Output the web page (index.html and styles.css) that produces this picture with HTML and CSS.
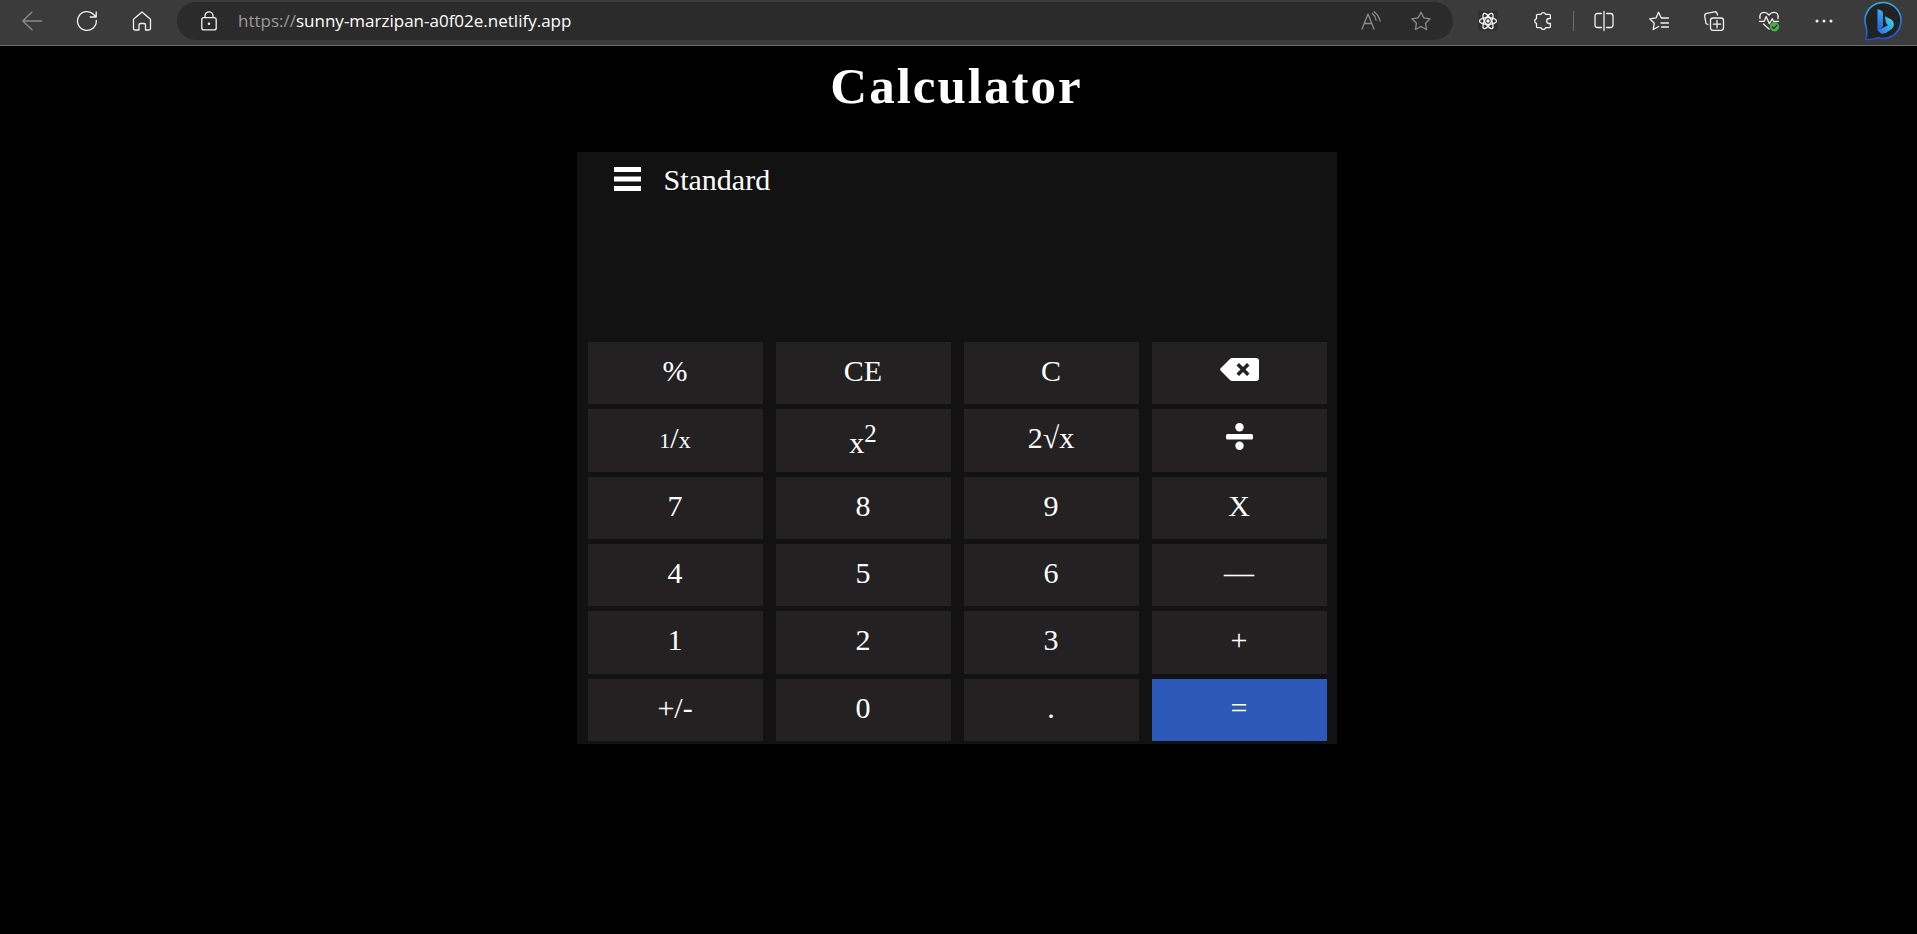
FILE: index.html
```html
<!DOCTYPE html>
<html lang="en">
<head>
<meta charset="utf-8">
<title>Calculator</title>
<link rel="stylesheet" href="styles.css">
</head>
<body>
<header class="toolbar">
  <nav class="nav" aria-label="Browser navigation">
    <button class="tool dim" aria-label="Back"><svg viewBox="0 0 20 20"><path d="M19.500 10H.8M10 1L.8 10l9.200 8.700"/></svg></button>
    <button class="tool" aria-label="Refresh"><svg viewBox="0 0 20 20"><path d="M19.300 9.500a9.400 9.400 0 1 1-2.600-6L19 6M19.200.8V6h-6"/></svg></button>
    <button class="tool" aria-label="Home"><svg viewBox="0 0 20 20"><path d="M1.500 8.200L10 1l8.500 7.200v9.300q0 1.500-1.500 1.500h-3.500v-5q0-1.500-1.500-1.500H8.500Q7 12.500 7 14v5H3q-1.500 0-1.500-1.500z"/></svg></button>
  </nav>
  <div class="address">
    <button class="lock" aria-label="Site information"><svg viewBox="0 0 20 20"><rect x="2.800" y="6.700" width="14.400" height="12.200" rx="2"/><path d="M6 6.500V4.800a4 4 0 0 1 8 0v1.700"/><circle class="solid" cx="10" cy="12.700" r="1.300"/></svg></button>
    <a class="url" href="#"><span class="scheme">https://</span>sunny-marzipan-a0f02e.netlify.app</a>
    <div class="page-tools">
      <button class="tool dim" aria-label="Read aloud"><svg viewBox="0 0 20 20"><path d="M1 18L7 3l6 15M3.400 12.500h7.200M11.500 2.500q3 2.500 3.500 6.500M13 .8q5 3.500 6 9.200"/></svg></button>
      <button class="tool dim" aria-label="Add to favorites"><svg viewBox="0 0 20 20"><path d="M10 1.200l2.800 5.700 6.300.9-4.600 4.400 1.100 6.300-5.600-3-5.600 3 1.100-6.300L.9 7.800l6.300-.9z"/></svg></button>
    </div>
  </div>
  <div class="actions">
    <button class="tool react" aria-label="React extension"><svg viewBox="0 0 20 20"><ellipse cx="10" cy="10" rx="8.500" ry="3.300"/><ellipse cx="10" cy="10" rx="8.500" ry="3.300" transform="rotate(60 10 10)"/><ellipse cx="10" cy="10" rx="8.500" ry="3.300" transform="rotate(120 10 10)"/><circle class="solid" cx="10" cy="10" r="1.700"/></svg></button>
    <button class="tool" aria-label="Extensions"><svg viewBox="0 0 20 20"><path d="M4.800 3.300H8a2.400 2.400 0 0 1 4.600 0h3.500q1.300 0 1.300 1.300v2.900h-1.200a2.500 2.500 0 0 0 0 5h1.200v2.900q0 1.300-1.300 1.300h-3.500a2.400 2.400 0 0 1-4.600 0H4.800q-1.300 0-1.300-1.300v-3a2.500 2.500 0 0 1 0-4.800v-3q0-1.300 1.300-1.300z"/></svg></button>
    <span class="divider"></span>
    <button class="tool" aria-label="Split screen"><svg viewBox="0 0 20 20"><path d="M7.500 2.500H3.500q-2.500 0-2.500 2.500v9q0 2.500 2.500 2.500h4M12.500 2.500h4q2.500 0 2.500 2.500v9q0 2.500-2.500 2.500h-4M10 .5v19"/></svg></button>
    <button class="tool" aria-label="Favorites"><svg viewBox="0 0 20 20"><path d="M19.500 7h-7.200L9.500 1.200 7 6.900l-6.300.9 4.600 4.400-1.100 6.300 5.500-3M12 12h7.500M12.500 16h7"/></svg></button>
    <button class="tool" aria-label="Collections"><svg viewBox="0 0 20 20"><rect x="6.500" y="7" width="13" height="12.300" rx="2.500"/><path d="M13 9.500v7.300M9.300 13.200h7.400M3.800 13.500L2 12.500.7 5.200Q.4 2.900 2.600 2.400L10.500.8q2-.3 2.600 1.700l.4 1.500"/></svg></button>
    <button class="tool" aria-label="Browser essentials"><svg viewBox="0 0 20 20"><path d="M1 7.500C.3 3 2.500 1.300 5 1.300q3 0 5 2.700 2-2.700 5-2.700c2.500 0 4.700 1.700 4 6.200M.5 10.300h4.700l2-4.800 3.200 7.200 2.800-5 1.300 2.600h5M4.500 13l5.500 5"/><circle class="badge" cx="15.500" cy="15.800" r="4.700"/><path class="check" d="M13.200 16l1.600 1.600 3-3.300"/></svg></button>
    <button class="tool" aria-label="Settings and more"><svg viewBox="0 0 20 20"><circle class="solid" cx="3" cy="10" r="1.500"/><circle class="solid" cx="10" cy="10" r="1.500"/><circle class="solid" cx="17" cy="10" r="1.500"/></svg></button>
    <button class="bing" aria-label="Bing"><svg viewBox="0 0 40 40"><defs><linearGradient id="ring" x2="0" y2="1"><stop stop-color="#2bb4ee"/><stop offset="1" stop-color="#1b50d0"/></linearGradient><linearGradient id="stem" x2="0" y2="1"><stop stop-color="#37b1f5"/><stop offset="1" stop-color="#2358dc"/></linearGradient><linearGradient id="bowl" x1="1" x2="0" y2="1"><stop stop-color="#3ce0e0"/><stop offset="1" stop-color="#2e6cf0"/></linearGradient></defs><path d="M1.800 38.200Q3.600 33 2.200 26A18 18 0 1 1 14 36.800Q7.500 39.300 1.800 38.200z" fill="#222" stroke="url(#ring)" stroke-width="1.600"/><path d="M13.500 8l3.800 1.400q1.700.7 1.700 2.500V25l-4 6q-1.500-1-1.500-3z" fill="url(#stem)"/><path d="M20.800 15.200l5.700 2.800q3.800 2.200 3.300 6.500-.5 3.200-3.700 4.800l-4.500 2.700q-5 2.500-7.300-2.700l9.700-5-2-2.200z" fill="url(#bowl)"/></svg></button>
  </div>
</header>
<main class="page">
  <h1 class="title">Calculator</h1>
  <section class="calculator" aria-label="Calculator">
    <div class="mode">
      <button class="menu" aria-label="Menu"><svg viewBox="0 0 27 25"><path d="M0 0h27v5H0zM0 9.500h27v5H0zM0 19h27v5H0z"/></svg></button>
      <span>Standard</span>
    </div>
    <output class="display"></output>
    <div class="keys">
      <button class="key">%</button>
      <button class="key">CE</button>
      <button class="key">C</button>
      <button class="key" aria-label="Backspace"><svg class="erase" viewBox="0 0 39 23"><path fill-rule="evenodd" d="M12 0h24q3 0 3 3v17q0 3-3 3H12q-1.200 0-2-1L.7 12.700q-1.100-1.200 0-2.400L10 1q.8-1 2-1zM20.500 11.500L16.500 15.500 19 18l4-4 4 4 2.500-2.500-4-4 4-4L27 5l-4 4-4-4-2.500 2.500z"/></svg></button>
      <button class="key"><span><span class="num">1</span>/<span class="den">x</span></span></button>
      <button class="key power"><span>x<sup>2</sup></span></button>
      <button class="key">2√x</button>
      <button class="key" aria-label="Divide"><svg class="divide" viewBox="0 0 27 27"><circle cx="13.500" cy="4.200" r="4.200"/><rect y="11" width="27" height="5.500" rx="1.500"/><circle cx="13.500" cy="22.800" r="4.200"/></svg></button>
      <button class="key">7</button>
      <button class="key">8</button>
      <button class="key">9</button>
      <button class="key">X</button>
      <button class="key">4</button>
      <button class="key">5</button>
      <button class="key">6</button>
      <button class="key">—</button>
      <button class="key">1</button>
      <button class="key">2</button>
      <button class="key">3</button>
      <button class="key">+</button>
      <button class="key">+/-</button>
      <button class="key">0</button>
      <button class="key">.</button>
      <button class="key equals">=</button>
    </div>
  </section>
</main>
</body>
</html>
```
FILE: styles.css
```css
* {
  box-sizing: border-box;
}

body {
  margin: 0;
  min-height: 100vh;
  background: #000;
  color: #fff;
  font-family: "Liberation Serif", "Times New Roman", serif;
}

button {
  margin: 0;
  padding: 0;
  border: 0;
  background: none;
  color: inherit;
  font: inherit;
  cursor: pointer;
}

svg {
  display: block;
}

.toolbar {
  display: flex;
  align-items: center;
  gap: 25px;
  height: 46px;
  padding: 0 13px 4px 22px;
  border-bottom: 1px solid #6e6e6e;
  background: #3b3b3b;
}

.nav {
  display: flex;
  gap: 35px;
}

.tool,
.lock {
  flex: none;
  width: 20px;
  height: 20px;
  color: #f2f2f2;
}

.tool svg,
.lock svg {
  width: 20px;
  height: 20px;
  overflow: visible;
  fill: none;
  stroke: currentColor;
  stroke-width: 1.3;
  stroke-linecap: round;
  stroke-linejoin: round;
}

.tool .solid,
.lock .solid {
  fill: currentColor;
  stroke: none;
}

.tool.dim {
  color: #8c8c8c;
}

.tool .badge {
  fill: #4caf50;
  stroke: none;
}

.tool .check {
  stroke: #1f3d20;
}

.react {
  background: #303030;
}

.address {
  display: flex;
  flex: 1;
  align-items: center;
  gap: 19px;
  height: 38px;
  padding: 0 22px;
  border-radius: 19px;
  background: #2b2b2b;
}

.url {
  flex: 1;
  color: #fff;
  font: 17px/24px "Open Sans", "Noto Sans", sans-serif;
  text-decoration: none;
}

.scheme {
  color: #9a9a9a;
}

.page-tools {
  display: flex;
  gap: 30px;
}

.actions {
  display: flex;
  align-items: center;
  gap: 35px;
}

.divider {
  width: 1px;
  height: 20px;
  margin: 0 -15px;
  background: #6e6e6e;
}

.bing {
  width: 40px;
  height: 40px;
  margin-left: -5px;
}

.page {
  display: flex;
  flex-direction: column;
  align-items: center;
  padding-right: 4px;
}

.title {
  margin: 12px 0 38px;
  font-size: 51px;
  line-height: 56px;
  letter-spacing: 2px;
}

.calculator {
  width: 760px;
  max-width: 100%;
  padding: 10px 10px 3px 11px;
  background: #121212;
}

.mode {
  display: flex;
  align-items: center;
  gap: 23px;
  padding-left: 26px;
  font-size: 30px;
  line-height: 36px;
}

.menu svg {
  width: 27px;
  height: 25px;
  margin-bottom: 2px;
  fill: #fff;
}

.display {
  display: block;
  height: 144px;
}

.keys {
  display: grid;
  grid-template-columns: repeat(4, 1fr);
  grid-template-rows: repeat(6, 1fr);
  gap: 5px 13px;
  height: 399px;
}

.key {
  display: flex;
  align-items: center;
  justify-content: center;
  padding-bottom: 4px;
  background: #232122;
  font-size: 30px;
}

.power {
  padding-bottom: 0;
}

.key svg {
  margin-bottom: 4px;
  fill: #fff;
}

.erase {
  width: 39px;
  height: 23px;
}

.divide {
  width: 27px;
  height: 27px;
}

.num {
  font-size: 22px;
}

.den {
  font-size: 24px;
}

sup {
  font-size: 25px;
}

.equals {
  background: #2b58b9;
}
```
